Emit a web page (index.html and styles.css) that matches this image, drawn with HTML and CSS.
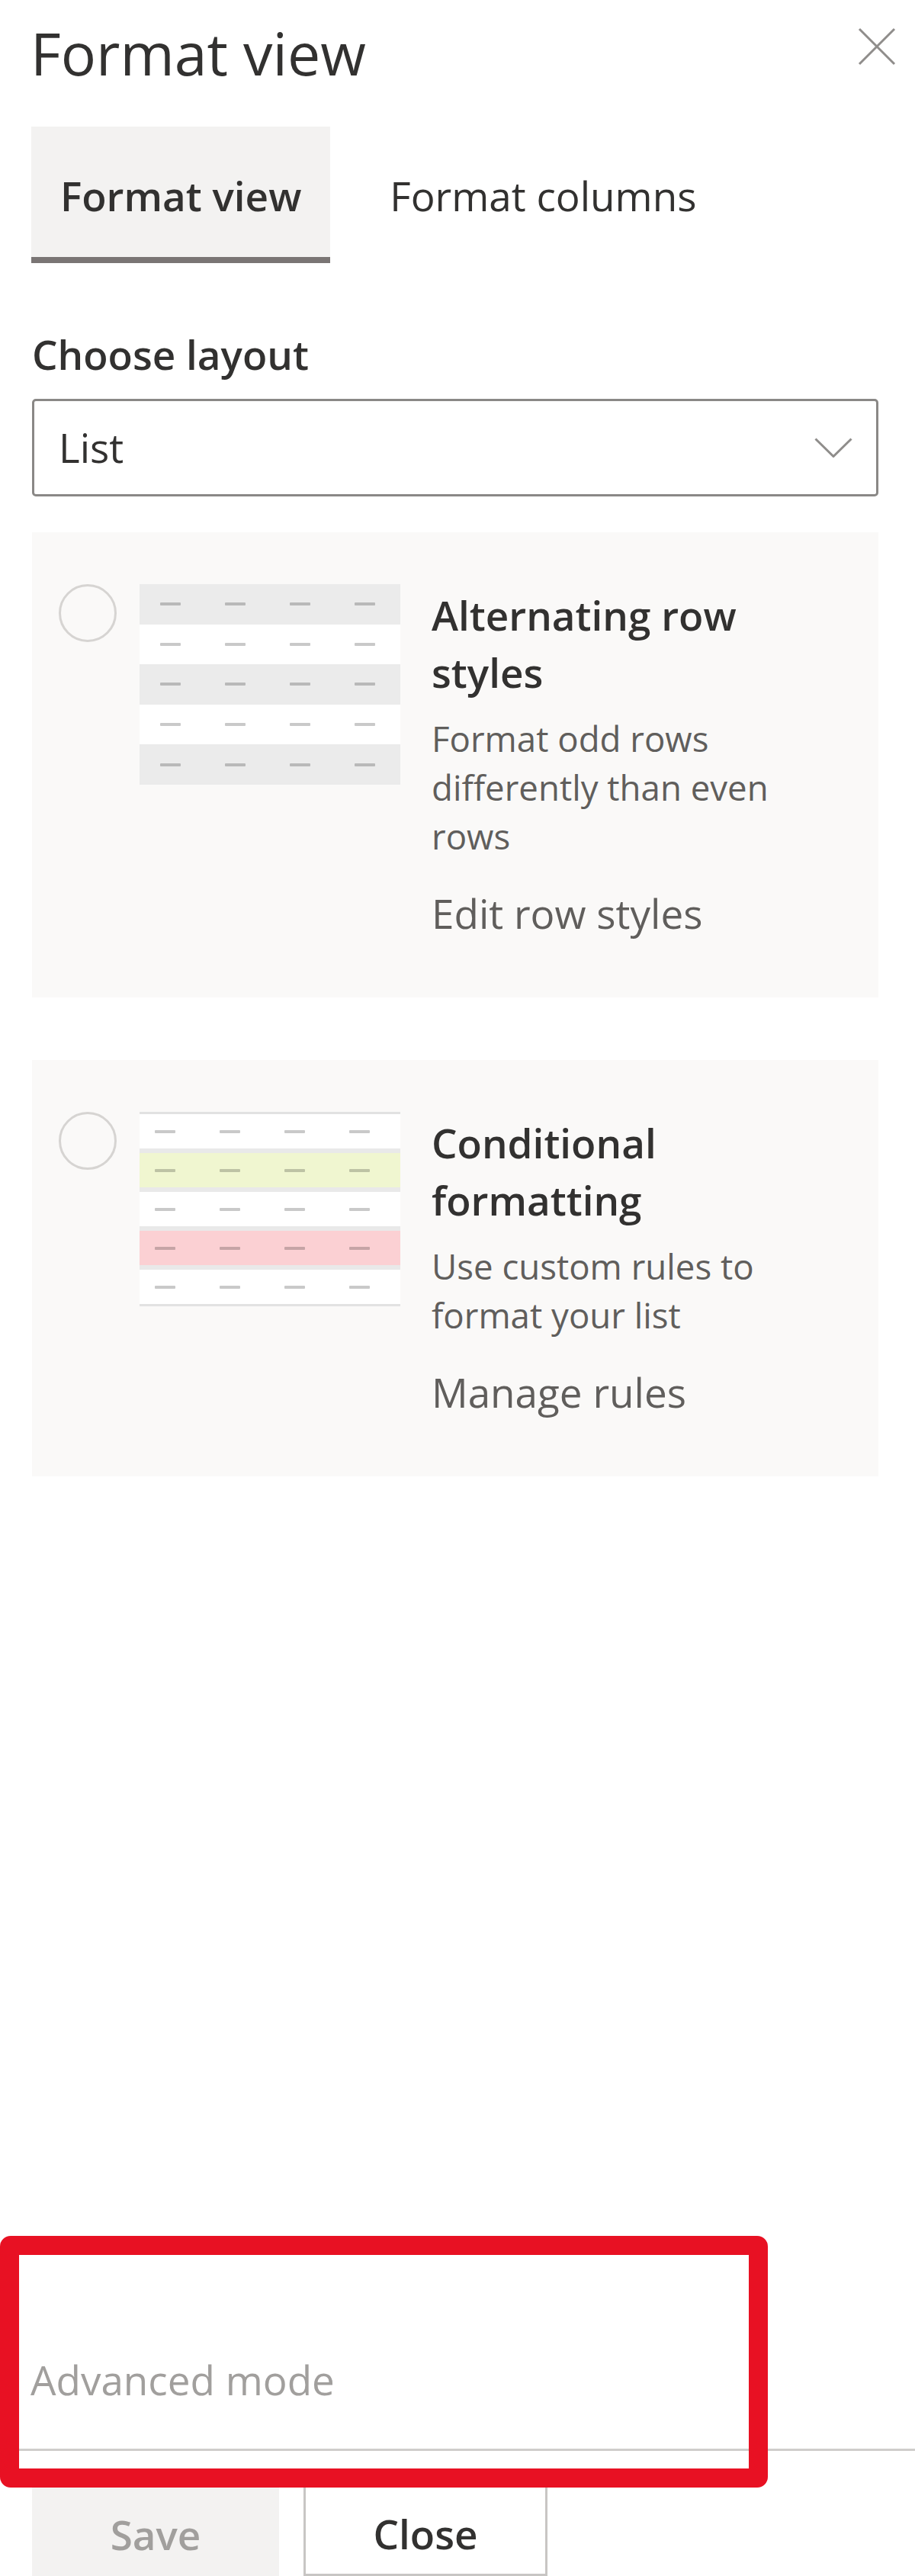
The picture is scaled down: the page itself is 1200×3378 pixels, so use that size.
FILE: index.html
```html
<!DOCTYPE html>
<html lang="en">
<head>
<meta charset="utf-8">
<title>Format view</title>
<link rel="stylesheet" href="styles.css">
</head>
<body>
<div class="panel">
  <header class="panel-header">
    <h1 class="panel-title">Format view</h1>
    <button class="close-btn" aria-label="Close">
      <svg viewBox="0 0 50 50" width="50" height="50"><path d="M2 2 L48 48 M48 2 L2 48" fill="none" stroke="#8f8d8b" stroke-width="3"/></svg>
    </button>
  </header>

  <nav class="pivot">
    <button class="pivot-link is-selected">Format view</button>
    <button class="pivot-link">Format columns</button>
  </nav>

  <main class="panel-body">
    <label class="field-label">Choose layout</label>
    <div class="dropdown">
      <span class="dropdown-value">List</span>
      <svg class="chevron" viewBox="0 0 50 26" width="50" height="26"><path d="M1.5 1.5 L25 24.5 L48.5 1.5" fill="none" stroke="#8f8d8b" stroke-width="3"/></svg>
    </div>

    <section class="option-card">
      <span class="radio"></span>
      <div class="preview preview-alt">
        <div class="pv-row shade"><i></i><i></i><i></i><i></i></div>
        <div class="pv-row"><i></i><i></i><i></i><i></i></div>
        <div class="pv-row shade"><i></i><i></i><i></i><i></i></div>
        <div class="pv-row"><i></i><i></i><i></i><i></i></div>
        <div class="pv-row shade"><i></i><i></i><i></i><i></i></div>
      </div>
      <div class="option-text">
        <h2 class="option-title">Alternating row styles</h2>
        <p class="option-desc">Format odd rows differently than even rows</p>
        <span class="option-link">Edit row styles</span>
      </div>
    </section>

    <section class="option-card second">
      <span class="radio"></span>
      <div class="preview preview-cond">
        <div class="pv-row"><i></i><i></i><i></i><i></i></div>
        <div class="pv-row green"><i></i><i></i><i></i><i></i></div>
        <div class="pv-row"><i></i><i></i><i></i><i></i></div>
        <div class="pv-row pink"><i></i><i></i><i></i><i></i></div>
        <div class="pv-row"><i></i><i></i><i></i><i></i></div>
      </div>
      <div class="option-text">
        <h2 class="option-title">Conditional formatting</h2>
        <p class="option-desc">Use custom rules to format your list</p>
        <span class="option-link">Manage rules</span>
      </div>
    </section>
  </main>

  <footer class="panel-footer">
    <div class="advanced">Advanced mode</div>
    <div class="divider"></div>
    <div class="actions">
      <button class="btn btn-save">Save</button>
      <button class="btn btn-close">Close</button>
    </div>
    <div class="highlight"></div>
  </footer>
</div>
</body>
</html>
```
FILE: styles.css
```css
html, body {
  margin: 0;
  padding: 0;
}

body {
  font-family: "Open Sans", "Noto Sans", sans-serif;
  color: #323130;
  background: #ffffff;
}

.panel {
  height: 3378px;
  display: grid;
  grid-template-rows: auto auto 1fr auto;
  overflow: hidden;
}

/* Header */
.panel-header {
  display: flex;
  justify-content: space-between;
  align-items: flex-start;
  padding: 20px 25px 0 40px;
}

.panel-title {
  margin: 0;
  font-size: 77px;
  font-weight: 400;
  line-height: 100px;
  color: #323130;
}

.close-btn {
  width: 50px;
  height: 50px;
  margin-top: 16px;
  padding: 0;
  border: 0;
  background: none;
}

.close-btn svg {
  display: block;
}

/* Pivot */
.pivot {
  display: flex;
  align-items: flex-start;
  gap: 40px;
  margin: 46px 0 0 41px;
}

.pivot-link {
  font-family: inherit;
  font-size: 53px;
  font-weight: 400;
  line-height: 76px;
  color: #323130;
  background: none;
  border: 0;
  border-bottom: 8px solid transparent;
  padding: 53px 38px 42px 38px;
}

.pivot-link.is-selected {
  background: #f3f2f1;
  border-bottom-color: #7a7574;
  font-weight: 600;
}

/* Body */
.panel-body {
  padding: 0 48px 0 42px;
}

.field-label {
  display: block;
  margin-top: 82px;
  font-size: 53px;
  font-weight: 600;
  line-height: 76px;
  color: #323130;
}

.dropdown {
  margin-top: 20px;
  height: 128px;
  box-sizing: border-box;
  border: 3px solid #8a8886;
  border-radius: 5px;
  display: flex;
  align-items: center;
  justify-content: space-between;
  padding: 0 31px 0 32px;
  font-size: 53px;
  line-height: 76px;
  color: #323130;
}

.chevron {
  display: block;
}

/* Option cards */
.option-card {
  margin-top: 47px;
  background: #faf9f8;
  display: flex;
  align-items: flex-start;
  padding: 68px 35px 72px 35px;
}

.option-card.second {
  margin-top: 82px;
}

.radio {
  flex: none;
  width: 76px;
  height: 76px;
  box-sizing: border-box;
  border: 3px solid #d6d4d2;
  border-radius: 50%;
}

.preview {
  flex: none;
  width: 342px;
  margin-left: 30px;
}

.pv-row {
  display: grid;
  grid-template-columns: repeat(4, 85px);
  align-items: center;
  background: #ffffff;
}

.pv-row i {
  display: block;
  width: 27px;
  height: 4px;
  border-radius: 1px;
  background: rgba(0, 0, 0, 0.21);
}

.preview-alt .pv-row {
  height: 52.6px;
  padding-left: 27px;
}

.preview-alt .shade {
  background: #ebebeb;
}

.preview-cond {
  border-top: 3px solid #e2e2e2;
  border-bottom: 3px solid #e2e2e2;
}

.preview-cond .pv-row {
  height: 45px;
  padding-left: 20px;
}

.preview-cond .pv-row + .pv-row {
  border-top: 6px solid #e9e9e9;
}

.preview-cond .green {
  background: #f0f6d0;
}

.preview-cond .pink {
  background: #fbd0d3;
}

.option-text {
  flex: 0 1 500px;
  margin-left: 41px;
  margin-top: 3px;
}

.option-title {
  margin: 0;
  font-size: 53px;
  font-weight: 600;
  line-height: 75px;
  color: #323130;
}

.option-desc {
  margin: 17px 0 0;
  font-size: 45.6px;
  line-height: 64px;
  color: #605e5c;
}

.option-link {
  display: block;
  margin-top: 32px;
  font-size: 53px;
  line-height: 76px;
  color: #605e5c;
}

/* Footer */
.panel-footer {
  position: relative;
  padding-top: 151px;
}

.advanced {
  padding-left: 40px;
  font-size: 53px;
  line-height: 76px;
  color: #a19f9d;
}

.divider {
  margin-top: 52px;
  height: 3px;
  background: #cfcdcb;
}

.actions {
  margin-top: 36px;
  display: flex;
  gap: 32px;
  padding-left: 42px;
  height: 128px;
}

.btn {
  box-sizing: border-box;
  height: 128px;
  padding: 20px 0 0;
  display: flex;
  align-items: center;
  justify-content: center;
  font-family: inherit;
  font-size: 53px;
  font-weight: 600;
  line-height: 76px;
}

.btn-save {
  width: 324px;
  background: #f3f2f1;
  color: #a19f9d;
  border: 0;
}

.btn-close {
  width: 320px;
  background: #ffffff;
  color: #323130;
  border: 3px solid #c8c6c4;
  border-top: 0;
}

.highlight {
  position: absolute;
  left: 0;
  top: 0;
  width: 1007px;
  height: 330px;
  box-sizing: border-box;
  border: 25px solid #e81123;
  border-radius: 14px;
  pointer-events: none;
}
```
